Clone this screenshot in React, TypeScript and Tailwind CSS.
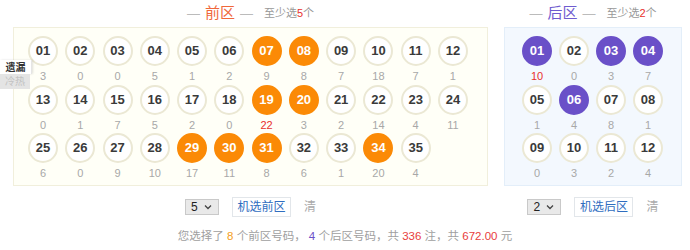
import React from "react";

const FONT = { fontFamily: '"Liberation Sans", Arial, "Noto Sans CJK SC", sans-serif' };

type Ball = { n: string; m: number; sel?: boolean; hot?: boolean };

const front: Ball[] = [
  { n: "01", m: 3 }, { n: "02", m: 0 }, { n: "03", m: 0 }, { n: "04", m: 5 },
  { n: "05", m: 1 }, { n: "06", m: 2 }, { n: "07", m: 9, sel: true }, { n: "08", m: 8, sel: true },
  { n: "09", m: 7 }, { n: "10", m: 18 }, { n: "11", m: 7 }, { n: "12", m: 1 },
  { n: "13", m: 0 }, { n: "14", m: 1 }, { n: "15", m: 7 }, { n: "16", m: 5 },
  { n: "17", m: 2 }, { n: "18", m: 0 }, { n: "19", m: 22, sel: true, hot: true }, { n: "20", m: 3, sel: true },
  { n: "21", m: 2 }, { n: "22", m: 14 }, { n: "23", m: 4 }, { n: "24", m: 11 },
  { n: "25", m: 6 }, { n: "26", m: 0 }, { n: "27", m: 9 }, { n: "28", m: 10 },
  { n: "29", m: 17, sel: true }, { n: "30", m: 11, sel: true }, { n: "31", m: 8, sel: true }, { n: "32", m: 6 },
  { n: "33", m: 1 }, { n: "34", m: 20, sel: true }, { n: "35", m: 4 },
];

const back: Ball[] = [
  { n: "01", m: 10, sel: true, hot: true }, { n: "02", m: 0 }, { n: "03", m: 3, sel: true }, { n: "04", m: 7, sel: true },
  { n: "05", m: 1 }, { n: "06", m: 4, sel: true }, { n: "07", m: 8 }, { n: "08", m: 1 },
  { n: "09", m: 0 }, { n: "10", m: 3 }, { n: "11", m: 2 }, { n: "12", m: 4 },
];

function Cell({ b, kind }: { b: Ball; kind: "front" | "back" }) {
  const selCls =
    kind === "front"
      ? "bg-[#fb8a06] border-[#fb8a06] text-white"
      : "bg-[#6a50c8] border-[#6a50c8] text-white";
  return (
    <div className="flex h-[48.5px] w-[30px] flex-col items-center">
      <div
        className={
          "flex h-[30px] w-[30px] items-center justify-center rounded-full border-2 text-[13px] font-bold " +
          (b.sel ? selCls : "bg-white border-[#ebe8d4] text-[#3a3a3a]")
        }
      >
        {b.n}
      </div>
      <div className={"mt-[2px] text-[11px] leading-[16px] " + (b.hot ? "text-[#e8302c]" : "text-[#a8a8a8]")}>
        {b.m}
      </div>
    </div>
  );
}

function Chevron() {
  return (
    <svg width="8" height="6" viewBox="0 0 8 6" className="ml-auto">
      <path d="M1 1.5 L4 4.5 L7 1.5" fill="none" stroke="#444" strokeWidth="1.3" />
    </svg>
  );
}

function Controls({ val, label }: { val: string; label: string }) {
  return (
    <div className="mt-[11px] flex h-[21px] items-center justify-center gap-[13px]">
      <div className="flex h-[16px] w-[34px] items-center border border-[#c9c9c9] bg-[#e9e9e9] pl-[5px] pr-[6px] text-[12px] text-[#222]">
        {val}
        <Chevron />
      </div>
      <div className="flex h-[20px] w-[59px] items-center justify-center border border-[#e2e6ea] bg-white text-[12px] text-[#2f6dbf]">
        {label}
      </div>
      <div className="text-[12px] text-[#aaa]">清</div>
    </div>
  );
}

export default function App() {
  return (
    <div className="relative h-[250px] w-[690px] bg-white" style={FONT}>
      <div className="flex gap-[16px] pl-[13px]">
        {/* front */}
        <div className="w-[475px]">
          <div className="flex h-[27px] items-center justify-center">
            <span className="text-[13px] text-[#bbb]">—</span>
            <span className="mx-[5px] text-[15px] text-[#f0673a]">前区</span>
            <span className="text-[13px] text-[#bbb]">—</span>
            <span className="ml-[11px] text-[11px] text-[#999]">
              至少选<span className="text-[#e8302c]">5</span>个
            </span>
          </div>
          <div className="border border-[#f1efdc] bg-[#fffff7] pb-[3px] pl-[14px] pt-[8px]">
            <div className="grid grid-cols-[repeat(12,30px)] gap-x-[7.27px]">
              {front.map((b) => (
                <Cell key={b.n} b={b} kind="front" />
              ))}
            </div>
          </div>
          <Controls val="5" label="机选前区" />
        </div>
        {/* back */}
        <div className="w-[178px]">
          <div className="flex h-[27px] items-center justify-center">
            <span className="text-[13px] text-[#bbb]">—</span>
            <span className="mx-[5px] text-[15px] text-[#6f5ccf]">后区</span>
            <span className="text-[13px] text-[#bbb]">—</span>
            <span className="ml-[11px] text-[11px] text-[#999]">
              至少选<span className="text-[#e8302c]">2</span>个
            </span>
          </div>
          <div className="border border-[#e3eef9] bg-[#f3f8fe] pb-[3px] pl-[17px] pt-[8px]">
            <div className="grid grid-cols-[repeat(4,30px)] gap-x-[7px]">
              {back.map((b) => (
                <Cell key={b.n} b={b} kind="back" />
              ))}
            </div>
          </div>
          <Controls val="2" label="机选后区" />
        </div>
      </div>
      <div className="mt-[10px] text-center text-[11.5px] leading-[16px] text-[#a0a0a0]">
        您选择了 <span className="text-[#f5a023]">8</span> 个前区号码，{" "}
        <span className="text-[#6a50c8]">4</span> 个后区号码，共{" "}
        <span className="text-[#e8403c]">336</span> 注，共{" "}
        <span className="text-[#e8403c]">672.00</span> 元
      </div>

      {/* left tab */}
      <div className="absolute left-0 top-[60px] w-[32px] text-[10px]">
        <div className="flex h-[14px] items-center justify-center border-r border-[#e5e5e5] bg-white font-bold text-[#333] shadow-[1px_0_2px_rgba(0,0,0,0.12)]">
          遗漏
        </div>
        <div className="flex h-[15px] w-[30px] items-center justify-center bg-[#e4e4e4] text-[#c2c2c2]">
          冷热
        </div>
      </div>
    </div>
  );
}
